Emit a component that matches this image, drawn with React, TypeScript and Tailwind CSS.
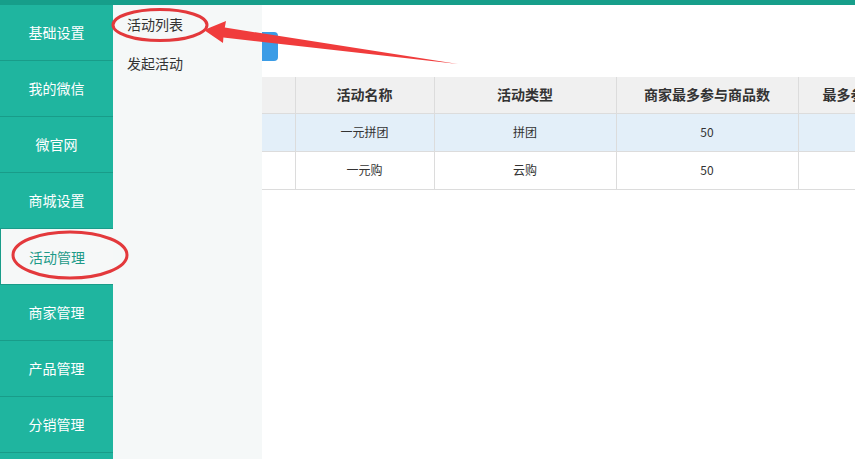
const mainMenu = [
  "基础设置",
  "我的微信",
  "微官网",
  "商城设置",
  "活动管理",
  "商家管理",
  "产品管理",
  "分销管理",
];

const subMenu = ["活动列表", "发起活动"];

const rows = [
  { name: "一元拼团", type: "拼团", count: 50 },
  { name: "一元购", type: "云购", count: 50 },
];

const App = () => {
  return (
    <div
      className="relative h-[459px] w-[855px] overflow-hidden bg-white"
      style={{ fontFamily: '"Noto Sans CJK SC", "Liberation Sans", sans-serif' }}
    >
      {/* top strip */}
      <div className="h-[5px] bg-[#169e8a]" />

      <div className="flex h-[454px]">
        {/* main menu */}
        <div className="w-[113px] shrink-0 bg-[#1fb59f]">
          {mainMenu.map((item) =>
            item === "活动管理" ? (
              <div
                key={item}
                className="flex h-[56px] items-center justify-center border-b border-l border-[#199c89] bg-[#f6f8f8] pt-[1px] text-[14px] text-[#1d9a88]"
              >
                {item}
              </div>
            ) : (
              <div
                key={item}
                className="flex h-[56px] items-center justify-center border-b border-[#199c89] text-[14px] text-white"
              >
                {item}
              </div>
            )
          )}
        </div>

        {/* sub menu */}
        <div className="w-[149px] shrink-0 bg-[#f5f8f8]">
          {subMenu.map((item) => (
            <div
              key={item}
              className="h-[39px] pl-[14px] text-[14px] leading-[39px] text-[#333]"
            >
              {item}
            </div>
          ))}
        </div>

        {/* content */}
        <div className="min-w-0 flex-1 overflow-hidden">
          <div className="mt-[27px] h-[29px] w-[16px] rounded-r-[4px] bg-[#3b9ce6]" />

          <table className="mt-[16px] w-[700px] table-fixed border-collapse text-[#333]">
            <colgroup>
              <col className="w-[33px]" />
              <col className="w-[139px]" />
              <col className="w-[182px]" />
              <col className="w-[182px]" />
              <col className="w-[164px]" />
            </colgroup>
            <thead>
              <tr className="h-[36px] bg-[#f0f0f0] text-[14px] font-bold">
                <th className="border-r border-b border-[#dcdcdc]" />
                <th className="border-r border-b border-[#dcdcdc]">活动名称</th>
                <th className="border-r border-b border-[#dcdcdc]">活动类型</th>
                <th className="border-r border-b border-[#dcdcdc]">商家最多参与商品数</th>
                <th className="border-b border-[#dcdcdc] text-left pl-[24px] whitespace-nowrap">最多参与人数</th>
              </tr>
            </thead>
            <tbody>
              {rows.map((row, index) => (
                <tr
                  key={row.name}
                  className={`h-[38px] text-[12px] ${index === 0 ? "bg-[#e3eff9]" : "bg-white"}`}
                >
                  <td className="border-r border-b border-[#dcdcdc]" />
                  <td className="border-r border-b border-[#dcdcdc] text-center">{row.name}</td>
                  <td className="border-r border-b border-[#dcdcdc] text-center">{row.type}</td>
                  <td className="border-r border-b border-[#dcdcdc] text-center">{row.count}</td>
                  <td className="border-b border-[#dcdcdc]" />
                </tr>
              ))}
            </tbody>
          </table>
        </div>
      </div>

      {/* red annotation marks */}
      <svg
        className="pointer-events-none absolute inset-0"
        width="855"
        height="459"
        viewBox="0 0 855 459"
      >
        <ellipse cx="160" cy="25" rx="47" ry="15.5" fill="none" stroke="#e3393c" strokeWidth="3" />
        <ellipse cx="70" cy="255" rx="57" ry="23" fill="none" stroke="#e3393c" strokeWidth="3" />
        <polygon
          points="204,30 226,21 224.8,27.5 458,64 223.4,37.5 223,43"
          fill="#f03c3c"
        />
      </svg>
    </div>
  );
};

export default App;
